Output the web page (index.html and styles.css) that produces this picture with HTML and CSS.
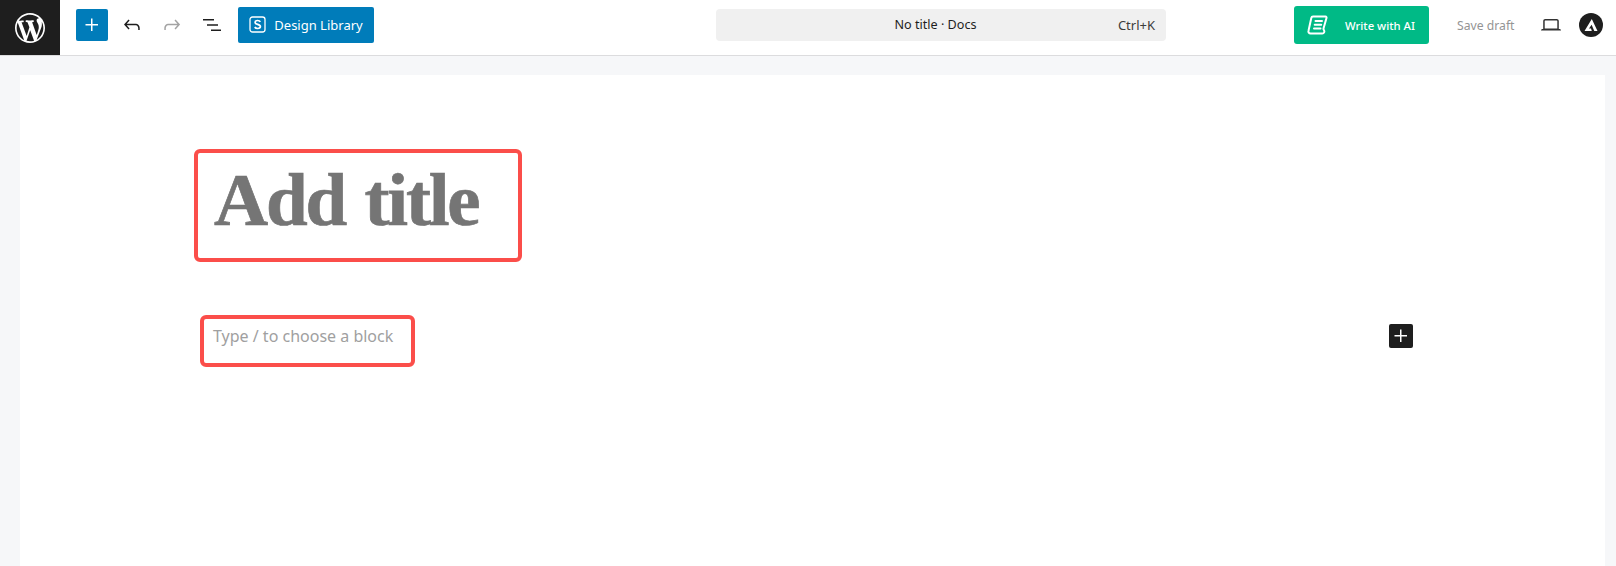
FILE: index.html
```html
<!DOCTYPE html>
<html lang="en">
<head>
    <title>No title - Docs</title>
    <link rel="stylesheet" href="styles.css">
</head>
<body>
    <header class="topbar">
        <a class="logo">
            <svg viewBox="0 0 20 20" width="30" height="30" fill="#fff"><path d="M20 10c0-5.51-4.49-10-10-10C4.48 0 0 4.49 0 10c0 5.52 4.48 10 10 10 5.51 0 10-4.48 10-10zM7.78 15.37L4.37 6.22c.55-.02 1.17-.08 1.17-.08.5-.06.44-1.13-.06-1.11 0 0-1.45.11-2.37.11-.18 0-.37 0-.58-.01C4.12 2.69 6.87 1.11 10 1.11c2.33 0 4.45.87 6.05 2.34-.68-.11-1.65.39-1.65 1.58 0 .74.45 1.36.9 2.1.35.61.55 1.36.55 2.46 0 1.49-1.4 5-1.4 5l-3.03-8.37c.54-.02.82-.17.82-.17.5-.05.44-1.25-.06-1.22 0 0-1.44.12-2.38.12-.87 0-2.33-.12-2.33-.12-.5-.03-.56 1.2-.06 1.22l.92.08 1.26 3.41zM17.41 10c.24-.64.74-1.87.43-4.25.7 1.29 1.05 2.71 1.05 4.25 0 3.29-1.73 6.24-4.4 7.78.97-2.59 1.94-5.2 2.92-7.78zM6.1 18.09C3.12 16.65 1.11 13.53 1.11 10c0-1.3.23-2.48.72-3.59C3.25 10.3 4.67 14.2 6.1 18.09zm4.03-6.63l2.58 6.98c-.86.29-1.76.45-2.71.45-.79 0-1.57-.11-2.29-.33.81-2.38 1.62-4.74 2.42-7.1z"/></svg>
        </a>

        <div class="tools">
            <button class="add-btn">
                <svg viewBox="0 0 24 24" width="24" height="24" fill="#fff"><path d="M11 12.500V18h1.500v-5.500H18V11h-5.500V5.500H11V11H5.500v1.500z"/></svg>
            </button>
            <button class="icon-btn">
                <svg viewBox="0 0 24 24" width="24" height="24" fill="#1e1e1e"><path d="M18.300 11.700c-.6-.6-1.400-.9-2.300-.9H6.700l2.900-3.300-1.100-1-4.500 5L8.500 16.500l1.100-1-2.900-3.200H16c.5 0 .9.200 1.200.500.7.700 1 1.600 1 2.300v2h1.500v-2c0-1.200-.5-2.500-1.400-3.400z"/></svg>
            </button>
            <button class="icon-btn">
                <svg viewBox="0 0 24 24" width="24" height="24" fill="#a3a3a3"><path d="M15.600 6.500l-1.100 1 2.900 3.300H8c-.9 0-1.700.3-2.300.9-.9.900-1.400 2.200-1.400 3.400v2h1.500v-2c0-.7.300-1.600 1-2.300.3-.3.700-.5 1.200-.5h9.400l-2.900 3.200 1.100 1 4.500-5-4.500-5z"/></svg>
            </button>
            <button class="icon-btn">
                <svg viewBox="0 0 24 24" width="24" height="24" fill="#1e1e1e"><path d="M3 6h11v1.500H3zM7 11.250h11v1.500H7zM11 16.500h10V18H11z"/></svg>
            </button>
            <button class="library-btn">
                <svg viewBox="0 0 18 18" width="18" height="18" fill="none"><rect x="1" y="1" width="15" height="15" rx="2.500" stroke="#fff" stroke-width="1.300"/><path d="M11.300 5.800c-.4-.8-1.500-1.300-2.700-1.300-1.400 0-2.500.7-2.500 1.900 0 2.500 5.300 1.500 5.300 4.200 0 1.200-1.200 1.900-2.700 1.900-1.300 0-2.400-.5-2.900-1.500" stroke="#fff" stroke-width="1.700"/></svg>
                <span>Design Library</span>
            </button>
        </div>

        <div class="command">
            <span class="command-title">No title · Docs</span>
            <span class="command-key">Ctrl+K</span>
        </div>

        <div class="actions">
            <button class="ai-btn">
                <svg viewBox="0 0 21 20" width="21" height="20" fill="none" stroke="#fff" stroke-width="2" stroke-linejoin="round" stroke-linecap="round"><path d="M6 1.500h12.500c.8 0 1.200.7 1 1.400l-3 10.600c-.2.700.1 1.200.5 1.800.9 1.300 0 3.200-1.700 3.200H3.500c-1.500 0-2.500-1.200-2-2.800L4.300 3c.2-.9.800-1.500 1.700-1.500z"/><path d="M8.500 6h6.500M7.700 9.700h6.500M7 13.400h6.500"/></svg>
                <span>Write with AI</span>
            </button>
            <span class="save-draft">Save draft</span>
            <button class="icon-btn preview">
                <svg viewBox="0 0 24 24" width="24" height="24" fill="#333"><path d="M20.500 16h-.7V8c0-1.100-.9-2-2-2H6.200c-1.100 0-2 .9-2 2v8h-.7c-.8 0-1.500.7-1.500 1.500h20c0-.8-.7-1.500-1.500-1.500zM5.700 8c0-.3.200-.5.500-.5h11.600c.3 0 .5.200.5.500v7.600H5.700V8z"/></svg>
            </button>
            <svg class="astra" viewBox="0 0 24 24" width="24" height="24"><circle cx="12" cy="12" r="12" fill="#1e1e1e"/><path d="M12.800 6L18.500 18h-3.200l-2.700-6.300L10 15.500l2 0 .8 2.500H5.500z" fill="#fff"/></svg>
        </div>
    </header>

    <main class="canvas">
        <div class="sheet">
            <div class="title-box">
                <h1>Add title</h1>
            </div>
            <div class="block-row">
                <div class="para-box">Type / to choose a block</div>
                <button class="block-add">
                    <svg viewBox="0 0 24 24" width="24" height="24" fill="#fff"><path d="M11 12.500V18h1.500v-5.500H18V11h-5.500V5.500H11V11H5.500v1.500z"/></svg>
                </button>
            </div>
        </div>
    </main>
</body>
</html>
```

FILE: styles.css
```css
* {
    box-sizing: border-box;
}

body {
    margin: 0;
    height: 566px;
    overflow: hidden;
    display: flex;
    flex-direction: column;
    background-color: #f6f7f9;
    color: #1e1e1e;
    font-family: "Noto Sans", "Open Sans", sans-serif;
    font-size: 13px;
}

button {
    display: flex;
    align-items: center;
    justify-content: center;
    padding: 0;
    border: none;
    background: none;
    font-family: inherit;
    cursor: pointer;
}

.topbar {
    flex: none;
    height: 56px;
    padding-bottom: 5px;
    display: flex;
    align-items: center;
    background: #fff;
    border-bottom: 1px solid #dcdcde;
}

.logo {
    flex: none;
    align-self: flex-start;
    width: 60px;
    height: 55px;
    display: flex;
    align-items: center;
    justify-content: center;
    background: #1e1e1e;
}

.tools {
    flex: none;
    width: 374px;
    padding-left: 16px;
    display: flex;
    align-items: center;
}

.add-btn {
    width: 32px;
    height: 32px;
    border-radius: 2px;
    background: #007cba;
}

.icon-btn {
    width: 40px;
    height: 32px;
}

.add-btn + .icon-btn {
    margin-left: 4px;
}

.library-btn {
    margin-left: 6px;
    width: 136px;
    height: 36px;
    gap: 7px;
    border-radius: 2px;
    background: #007cba;
    color: #fff;
    font-size: 13px;
}

.command {
    flex: none;
    position: relative;
    margin-left: 282px;
    width: 450px;
    height: 32px;
    display: flex;
    align-items: center;
    justify-content: center;
    border-radius: 4px;
    background: #f0f0f0;
    font-size: 12.6px;
}

.command-title {
    margin-left: -11px;
    margin-top: -2px;
}

.command-key {
    position: absolute;
    right: 11px;
    top: 7px;
    color: #3c3c3c;
    font-size: 13px;
}

.actions {
    flex: none;
    margin-left: 128px;
    display: flex;
    align-items: center;
}

.ai-btn {
    width: 135px;
    height: 38px;
    padding-right: 1px;
    gap: 17px;
    border-radius: 3px;
    background: #00ba86;
    color: #fff;
    font-size: 11.3px;
    font-weight: 500;
}

.save-draft {
    margin-left: 28px;
    color: #949494;
    font-size: 12.2px;
}

.preview {
    margin-left: 17px;
}

.astra {
    margin-left: 8px;
}

.canvas {
    flex: 1;
    padding: 19px 11px 0 20px;
}

.sheet {
    height: 100%;
    padding: 74px 0 0 174px;
    background: #fff;
}

.title-box {
    width: 328px;
    height: 113px;
    padding: 0 0 0 16px;
    border: 4px solid #fb4e4a;
    border-radius: 6px;
}

h1 {
    margin: 0;
    padding-top: 2px;
    color: #757575;
    font-family: "Liberation Serif", serif;
    font-size: 75px;
    font-weight: 700;
    letter-spacing: -2.2px;
    word-spacing: 3px;
    line-height: 90px;
    -webkit-text-stroke: 0.7px #757575;
}

.block-row {
    margin-top: 53px;
    padding-left: 6px;
    display: flex;
    align-items: flex-start;
}

.para-box {
    width: 215px;
    height: 52px;
    padding: 2px 0 0 9px;
    border: 4px solid #fb4e4a;
    border-radius: 6px;
    color: #a0a0a0;
    font-size: 16px;
    line-height: 30px;
}

.block-add {
    margin-left: 974px;
    margin-top: 9px;
    width: 24px;
    height: 24px;
    border-radius: 2px;
    background: #1e1e1e;
}
```
